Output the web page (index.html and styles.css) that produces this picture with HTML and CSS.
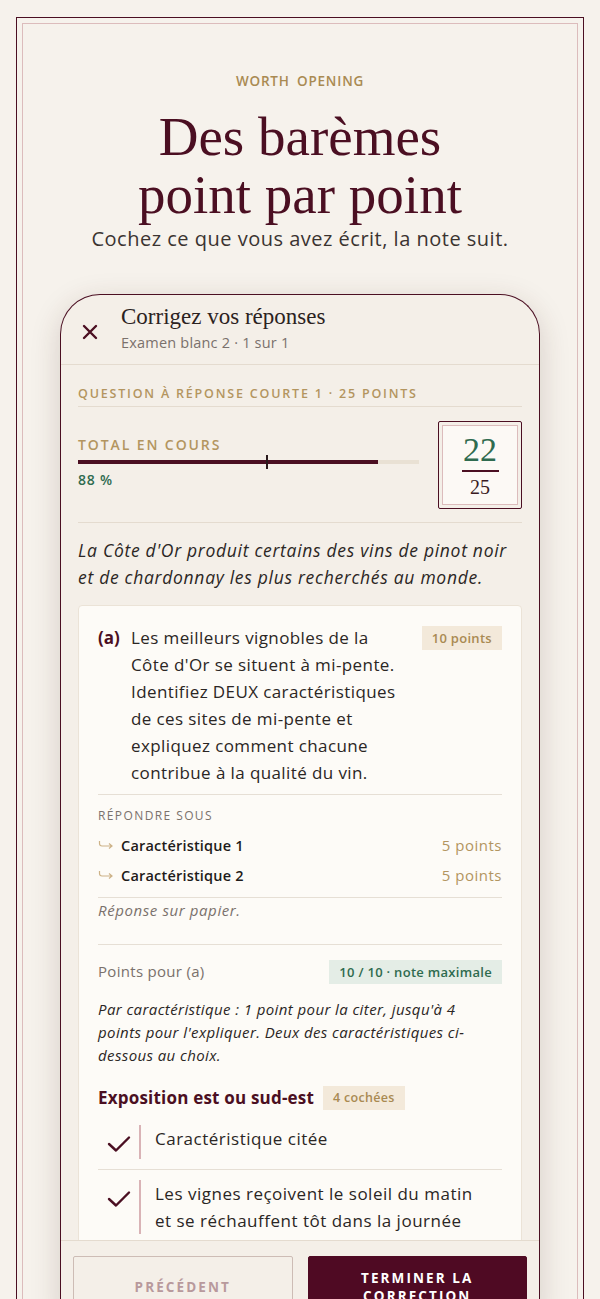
FILE: index.html
```html
<!DOCTYPE html>
<html lang="fr">
<head>
    <meta charset="UTF-8">
    <meta name="viewport" content="width=device-width, initial-scale=1.0">
    <title>Des barèmes point par point</title>
    <link rel="stylesheet" href="styles.css">
</head>
<body>
    <div class="frame">
        <div class="frame-inner">
            <p class="eyebrow">WORTH OPENING</p>
            <h1 class="title">Des barèmes<br>point par point</h1>
            <p class="lead">Cochez ce que vous avez écrit, la note suit.</p>

            <div class="phone">
                <div class="ph-head">
                    <svg class="close" width="16" height="16" viewBox="0 0 16 16">
                        <path d="M2 2 L14 14 M14 2 L2 14" stroke="#4b0f22" stroke-width="2.4" stroke-linecap="round"/>
                    </svg>
                    <div>
                        <div class="ph-title">Corrigez vos réponses</div>
                        <div class="ph-sub">Examen blanc 2 · 1 sur 1</div>
                    </div>
                </div>

                <div class="ph-body">
                    <p class="qlabel">QUESTION À RÉPONSE COURTE 1 · 25 POINTS</p>

                    <div class="total">
                        <div class="total-left">
                            <p class="total-label">TOTAL EN COURS</p>
                            <div class="bar">
                                <div class="bar-fill" style="width: 88%"></div>
                                <div class="bar-mark"></div>
                            </div>
                            <p class="pct">88 %</p>
                        </div>
                        <div class="score">
                            <div class="score-in">
                                <span class="score-got">22</span>
                                <span class="score-rule"></span>
                                <span class="score-max">25</span>
                            </div>
                        </div>
                    </div>

                    <p class="intro">La Côte d'Or produit certains des vins de pinot noir et de chardonnay les plus recherchés au monde.</p>

                    <div class="qcard">
                        <div class="qrow">
                            <span class="qletter">(a)</span>
                            <p class="qtext">Les meilleurs vignobles de la Côte d'Or se situent à mi-pente. Identifiez DEUX caractéristiques de ces sites de mi-pente et expliquez comment chacune contribue à la qualité du vin.</p>
                            <span class="chip">10 points</span>
                        </div>

                        <div class="answer">
                            <p class="small-caps">RÉPONDRE SOUS</p>
                            <div class="arow">
                                <svg class="hook" width="16" height="10" viewBox="0 0 16 10"><path d="M1.5 1 V3.5 Q1.5 6 4 6 H14 M11 3.5 L14 6 L11 8.5" fill="none" stroke="#cdb287" stroke-width="1.2"/></svg>
                                <span class="aname">Caractéristique 1</span>
                                <span class="apts">5 points</span>
                            </div>
                            <div class="arow">
                                <svg class="hook" width="16" height="10" viewBox="0 0 16 10"><path d="M1.5 1 V3.5 Q1.5 6 4 6 H14 M11 3.5 L14 6 L11 8.5" fill="none" stroke="#cdb287" stroke-width="1.2"/></svg>
                                <span class="aname">Caractéristique 2</span>
                                <span class="apts">5 points</span>
                            </div>
                        </div>
                        <p class="paper">Réponse sur papier.</p>

                        <div class="grade">
                            <div class="grade-row">
                                <span class="grade-label">Points pour (a)</span>
                                <span class="chip chip-green">10 / 10 · note maximale</span>
                            </div>
                            <p class="rubric">Par caractéristique : 1 point pour la citer, jusqu'à 4 points pour l'expliquer. Deux des caractéristiques ci-dessous au choix.</p>

                            <div class="crit-head">
                                <span class="crit-name">Exposition est ou sud-est</span>
                                <span class="chip chip-sm">4 cochées</span>
                            </div>
                            <div class="check">
                                <span class="tick-box">
                                    <svg width="24" height="18" viewBox="0 0 24 18"><path d="M2 9 L9 15.5 L22 2.5" fill="none" stroke="#4b0f22" stroke-width="2.4" stroke-linecap="round" stroke-linejoin="round"/></svg>
                                </span>
                                <p class="check-text">Caractéristique citée</p>
                            </div>
                            <div class="check">
                                <span class="tick-box">
                                    <svg width="24" height="18" viewBox="0 0 24 18"><path d="M2 9 L9 15.5 L22 2.5" fill="none" stroke="#4b0f22" stroke-width="2.4" stroke-linecap="round" stroke-linejoin="round"/></svg>
                                </span>
                                <p class="check-text">Les vignes reçoivent le soleil du matin et se réchauffent tôt dans la journée</p>
                            </div>
                        </div>
                    </div>
                </div>

                <div class="ph-foot">
                    <button class="btn btn-ghost">PRÉCÉDENT</button>
                    <button class="btn btn-main">TERMINER LA CORRECTION</button>
                </div>
            </div>
        </div>
    </div>
</body>
</html>
```

FILE: styles.css
```css
body {
    margin: 0;
    background-color: #f6f2ec;
    font-family: "Open Sans", "Noto Sans", sans-serif;
    color: #2b2624;
    overflow: hidden;
    height: 1299px;
}

p {
    margin: 0;
}

.frame {
    margin: 17px 16px 0;
    border: 1.5px solid #4b0f22;
    border-bottom: none;
    padding: 5px 5px 0;
    height: 1300px;
}

.frame-inner {
    border: 1px solid #dcbcbc;
    border-bottom: none;
    height: 100%;
    text-align: center;
}

.eyebrow {
    padding-top: 48px;
    font-size: 13.5px;
    font-weight: 600;
    letter-spacing: 0.8px;
    word-spacing: 3px;
    color: #a98a52;
}

.title {
    margin: 18px 0 0;
    font-family: "Liberation Serif", serif;
    font-weight: 400;
    font-size: 55px;
    line-height: 58px;
    color: #4b0f22;
}

.lead {
    margin-top: 2px;
    font-size: 20px;
    line-height: 26px;
    letter-spacing: 0.5px;
    color: #3b3431;
}

/* phone mockup */
.phone {
    margin: 42px 37px 0;
    border: 1.5px solid #4b0f22;
    border-bottom: none;
    border-radius: 40px 40px 0 0;
    background-color: #f4efe8;
    box-shadow: 0 8px 30px rgba(70, 40, 25, 0.18);
    text-align: left;
    overflow: hidden;
}

.ph-head {
    display: flex;
    align-items: center;
    gap: 23px;
    height: 69px;
    padding-left: 21px;
    border-bottom: 1px solid #e4dbcf;
}

.close {
    margin-top: 4px;
}

.ph-title {
    font-family: "Liberation Serif", serif;
    font-size: 23px;
    line-height: 26px;
    color: #2b2221;
    margin-top: -4px;
}

.ph-sub {
    font-size: 14.5px;
    letter-spacing: 0.2px;
    color: #7a716c;
    margin-top: 3px;
}

.ph-body {
    height: 875px;
    overflow: hidden;
    padding: 0 17px;
}

.qlabel {
    padding: 20px 0 4px;
    border-bottom: 1px solid #e4dbcf;
    font-size: 12.5px;
    font-weight: 600;
    letter-spacing: 1.8px;
    color: #b3955f;
}

.total {
    display: flex;
    align-items: center;
    padding: 14px 0 13px;
    border-bottom: 1px solid #e4dbcf;
}

.total-left {
    flex: 1;
    padding-right: 19px;
    margin-top: -6px;
}

.total-label {
    font-size: 14px;
    font-weight: 600;
    letter-spacing: 1.9px;
    color: #b3955f;
}

.bar {
    position: relative;
    height: 4px;
    margin-top: 6px;
    background-color: #e9e1d4;
}

.bar-fill {
    height: 100%;
    background-color: #4b0f22;
}

.bar-mark {
    position: absolute;
    left: 55%;
    top: -5px;
    width: 2px;
    height: 14px;
    background-color: #2a1a1c;
}

.pct {
    margin-top: 6px;
    font-size: 14px;
    font-weight: 600;
    letter-spacing: 0.8px;
    color: #2f6b4f;
}

.score {
    width: 84px;
    height: 88px;
    box-sizing: border-box;
    padding: 3px;
    border: 1.5px solid #4b0f22;
    border-radius: 2px;
}

.score-in {
    height: 100%;
    box-sizing: border-box;
    border: 1px solid #dcbcbc;
    background-color: #fcf9f5;
    display: flex;
    flex-direction: column;
    align-items: center;
    justify-content: center;
    font-family: "Liberation Serif", serif;
}

.score-got {
    font-size: 34px;
    line-height: 34px;
    color: #2f6b4f;
}

.score-rule {
    width: 37px;
    height: 2px;
    margin: 3px 0 4px;
    background-color: #4b0f22;
}

.score-max {
    font-size: 20px;
    line-height: 22px;
    color: #3a1a22;
}

.intro {
    margin: 14px 0 14px;
    font-size: 17.5px;
    line-height: 27px;
    letter-spacing: 0.7px;
    font-style: italic;
    color: #2b2624;
}

/* question card */
.qcard {
    background-color: #fdfbf7;
    border: 1px solid #ebe3d7;
    border-radius: 4px;
    padding: 18px 19px 0;
}

.qrow {
    display: flex;
    align-items: flex-start;
    padding-bottom: 8px;
    border-bottom: 1.5px solid #e6dfd5;
}

.qletter {
    width: 33px;
    flex: none;
    font-size: 17px;
    line-height: 27px;
    font-weight: 700;
    color: #4b0f22;
}

.qtext {
    flex: 1;
    padding-right: 12px;
    font-size: 17px;
    line-height: 27px;
    letter-spacing: 0.4px;
    color: #2b2624;
}

.chip {
    flex: none;
    padding: 0 10px;
    height: 24px;
    line-height: 24px;
    background-color: #f3e9da;
    color: #a98a52;
    font-size: 13px;
    font-weight: 600;
    letter-spacing: 0.3px;
    margin-top: 2px;
}

.chip-green {
    background-color: #e4ede6;
    color: #2f6b4f;
}

.chip-sm {
    font-size: 12.5px;
}

.answer {
    padding-top: 13px;
    padding-bottom: 7px;
    border-bottom: 1.5px solid #e6dfd5;
}

.small-caps {
    font-size: 12px;
    line-height: 16px;
    letter-spacing: 1.4px;
    color: #7a716c;
    margin-bottom: 6px;
}

.arow {
    display: flex;
    align-items: center;
    height: 30px;
}

.hook {
    margin-right: 7px;
}

.aname {
    flex: 1;
    font-size: 14.5px;
    font-weight: 600;
    letter-spacing: 0.2px;
    color: #1f1b1a;
}

.apts {
    font-size: 15px;
    letter-spacing: 0.5px;
    color: #b3955f;
}

.paper {
    padding: 2px 0 24px;
    border-bottom: 1.5px solid #e6dfd5;
    font-size: 15px;
    line-height: 20px;
    letter-spacing: 0.6px;
    font-style: italic;
    color: #7a716c;
}

.grade {
    padding-top: 13px;
}

.grade-row {
    display: flex;
    align-items: center;
    justify-content: space-between;
}

.grade-label {
    font-size: 15px;
    letter-spacing: 0.3px;
    color: #7a716c;
}

.rubric {
    margin-top: 14px;
    font-size: 15px;
    line-height: 23px;
    letter-spacing: 0.4px;
    font-style: italic;
    color: #2b2624;
}

.crit-head {
    display: flex;
    align-items: center;
    gap: 9px;
    margin-top: 17px;
    margin-bottom: 5px;
}

.crit-name {
    font-size: 17px;
    font-weight: 700;
    letter-spacing: 0.2px;
    color: #4b0f22;
}

.check {
    display: flex;
    padding: 10px 0;
    border-bottom: 1.5px solid #e6dfd5;
}

.check:last-child {
    border-bottom: none;
}

.tick-box {
    flex: none;
    width: 41px;
    height: 34px;
    display: flex;
    align-items: center;
    justify-content: center;
    padding-top: 3px;
    box-sizing: border-box;
}

.check-text {
    padding: 0 16px 0 14px;
    border-left: 2px solid #d9b3b6;
    font-size: 17px;
    line-height: 27px;
    letter-spacing: 0.5px;
    color: #2b2624;
}

/* footer buttons */
.ph-foot {
    display: flex;
    gap: 15px;
    padding: 15px 12px 0;
    border-top: 1px solid #e4dbcf;
}

.btn {
    flex: 1;
    height: 62px;
    font-family: "Open Sans", "Noto Sans", sans-serif;
    font-size: 13.5px;
    font-weight: 700;
    letter-spacing: 2.1px;
    line-height: 18px;
    padding: 0 24px;
    border-radius: 2px;
}

.btn-ghost {
    background-color: #f4efe8;
    border: 1px solid #cdbcb5;
    color: #b8999c;
}

.btn-main {
    background-color: #4f0a23;
    border: 1px solid #4f0a23;
    color: #fff;
}
```
